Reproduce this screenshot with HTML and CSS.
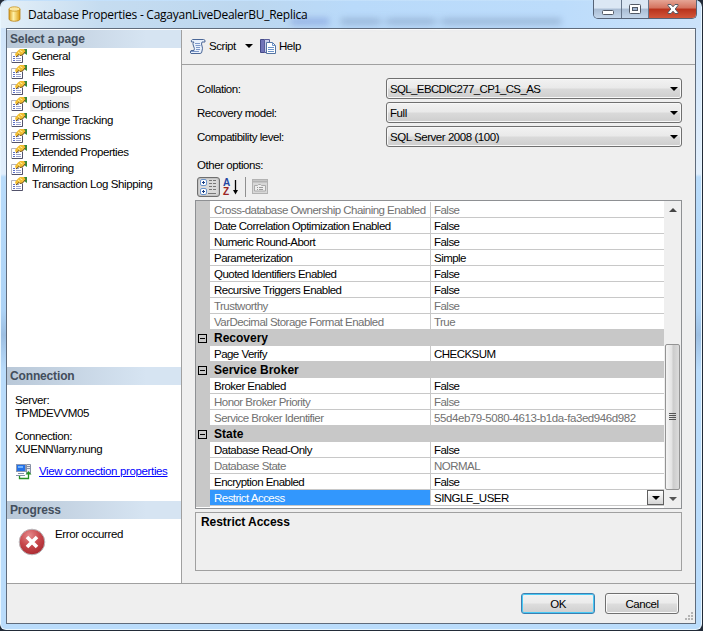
FILE: index.html
```html
<!DOCTYPE html>
<html lang="en">
<head>
<meta charset="utf-8">
<title>Database Properties</title>
<link rel="stylesheet" href="styles.css">
</head>
<body>
<svg width="0" height="0" class="defs" aria-hidden="true">
  <defs>
    <linearGradient id="gold"><stop offset="0" stop-color="#d99a18"/><stop offset=".4" stop-color="#fff2a8"/><stop offset="1" stop-color="#dc9c10"/></linearGradient>
    <radialGradient id="red" cx=".4" cy=".25" r=".8"><stop offset="0" stop-color="#e58a8c"/><stop offset=".5" stop-color="#c8484d"/><stop offset="1" stop-color="#a8282e"/></radialGradient>
    <symbol id="page" viewBox="0 0 16 16">
      <path d="M.5 4.500h11v10H.5z" fill="#fff" stroke="#b4b4be"/>
      <path d="M1 14.500h10.500V8" fill="none" stroke="#52526a"/>
      <path d="M2 8.500h2M2 10.500h2M2 12.500h2" stroke="#5d70c8"/>
      <path d="M5 8.500h3M5 10.500h5M5 12.500h5" stroke="#9aa3cf"/>
      <path d="M13 1h3v6l-3-2z" fill="#378b3b"/>
      <path d="M4 6l3-3.500 2-1.500h4l1.500 2.500-3 3.500-2.500.5-1-1-3 2.500z" fill="#f2bd32"/>
      <path d="M5 9l3-2.500 1 1 2.500-.5 3-3.500" fill="none" stroke="#74531b"/>
      <path d="M7 4l2 1.500M9 2.500l2.500 1.500" stroke="#fff1a0"/>
    </symbol>
  </defs>
</svg>
<div class="window">
  <header class="titlebar">
    <svg class="db" width="14" height="16" viewBox="0 0 14 16"><path d="M1 3v10c0 3 11 3 11 0V3z" fill="url(#gold)" stroke="#b88016" stroke-width=".8"/><ellipse cx="6.500" cy="3" rx="5.500" ry="2.200" fill="#fbe7a0" stroke="#c99522" stroke-width=".8"/></svg>
    <div class="haze"></div>
    <h1>Database Properties - CagayanLiveDealerBU_Replica</h1>
    <div class="controls">
      <span class="ctl min"><svg width="14" height="8" viewBox="0 0 14 8"><rect x="1.500" y="2.500" width="11" height="4" rx="1" fill="#fff" stroke="#535a66"/></svg></span>
      <span class="ctl max"><svg width="14" height="12" viewBox="0 0 14 12"><rect x="1.500" y="1.500" width="11" height="9" rx="1" fill="#fff" stroke="#535a66"/><rect x="4.500" y="4.500" width="5" height="3" fill="#9fb3cf" stroke="#535a66"/></svg></span>
      <span class="ctl close"><svg width="14" height="12" viewBox="0 0 14 12"><path d="M2 1.500h3l2 2.300 2-2.300h3v1L9.200 6l2.800 3.500v1H9L7 8.200 5 10.500H2v-1L4.800 6 2 2.500z" fill="#fff" stroke="#535a66"/></svg></span>
    </div>
  </header>
  <div class="client">
    <div class="body">
      <aside class="side">
        <h2>Select a page</h2>
        <ul class="pages">
          <li><svg><use href="#page"/></svg><span>General</span></li>
          <li><svg><use href="#page"/></svg><span>Files</span></li>
          <li><svg><use href="#page"/></svg><span>Filegroups</span></li>
          <li class="current"><svg><use href="#page"/></svg><span>Options</span></li>
          <li><svg><use href="#page"/></svg><span>Change Tracking</span></li>
          <li><svg><use href="#page"/></svg><span>Permissions</span></li>
          <li><svg><use href="#page"/></svg><span>Extended Properties</span></li>
          <li><svg><use href="#page"/></svg><span>Mirroring</span></li>
          <li><svg><use href="#page"/></svg><span>Transaction Log Shipping</span></li>
        </ul>
        <h2>Connection</h2>
        <div class="conn">
          <p>Server:<br>TPMDEVVM05</p>
          <p>Connection:<br>XUENN\larry.nung</p>
          <div class="link">
            <svg width="17" height="17" viewBox="0 0 17 17"><rect x="1.500" y="1.500" width="9" height="7" fill="#2371e8" stroke="#8c98b0"/><path d="M3 3h5v2H3z" fill="#6fb2ff"/><path d="M3 10.500h6M1 12.500h9" stroke="#8590a8"/><path d="M11.500 1.500h4v9h-4z" fill="#e7e9ef" stroke="#8790a5"/><path d="M12 3.500h3M12 5.500h3" stroke="#8790a5"/><path d="M4.500 13v2.500h9V9" fill="none" stroke="#269026" stroke-width="1.300"/><path d="M10.500 11.500l3-3.500 3 3.500z" fill="#269026"/></svg>
            <a>View connection properties</a>
          </div>
        </div>
        <h2>Progress</h2>
        <div class="progress">
          <svg width="28" height="28" viewBox="0 0 28 28"><circle cx="14" cy="14" r="12.800" fill="url(#red)" stroke="#b9b9bd"/><path d="M9 9l10 10M19 9L9 19" stroke="#fff" stroke-width="3.600"/></svg>
          <span>Error occurred</span>
        </div>
      </aside>
      <main class="main">
        <div class="toolbar">
          <svg width="17" height="17" viewBox="0 0 17 17"><path d="M3.500 1.500h11q2 0 1.500 2.500h-3q-1 2 0 4t0 5q0 2.500-2 2.500H2q-1.500-1.500 0-3h3q1-2-.5-4.500T5 4H2.500q-1-1.500 1-2.500z" fill="#e9f1fc" stroke="#4b6797"/><path d="M6 5.500h5M6.500 7.500h5M7 9.500h4M7 11.500h4M2 13.500h8" stroke="#7d98c8"/></svg>
          <span class="script">Script</span><i class="tri"></i>
          <svg width="16" height="17" viewBox="0 0 16 17"><path d="M.5 1.500h4v13h-4z" fill="#7174b8" stroke="#454a88"/><path d="M4.500 1.500h5v13h-5z" fill="#c9cdeb" stroke="#5a5f9c"/><path d="M6.500 4.500h6l3 3v8h-9z" fill="#fff" stroke="#5474a3"/><path d="M12.500 4.500v3h3M8 9.500h6M8 11.500h6M8 13.500h6" fill="none" stroke="#6a93c9"/></svg>
          <span>Help</span>
        </div>
        <div class="panel">
          <div class="field"><label>Collation:</label><div class="select tight">SQL_EBCDIC277_CP1_CS_AS<i class="tri"></i></div></div>
          <div class="field"><label>Recovery model:</label><div class="select">Full<i class="tri"></i></div></div>
          <div class="field"><label>Compatibility level:</label><div class="select">SQL Server 2008 (100)<i class="tri"></i></div></div>
          <p class="other">Other options:</p>
          <div class="gridbar">
            <span class="cat"><svg width="18" height="16" viewBox="0 0 18 16"><rect x=".5" y=".5" width="6" height="6" rx="1.500" fill="#fff" stroke="#6c95cc"/><rect x=".5" y="9.500" width="6" height="6" rx="1.500" fill="#fff" stroke="#6c95cc"/><path d="M2 3.500h3M3.500 2v3M2 12.500h3M3.500 11v3" stroke="#173d86"/><path d="M9 1.500h3M13 1.500h3M9 4.500h3M13 4.500h3M9 7.500h3M13 7.500h3M9 10.500h3M13 10.500h3M8 14.500h8" stroke="#777"/></svg></span>
            <span class="sort"><span class="az"><b>A</b><b>Z</b></span><svg width="7" height="15" viewBox="0 0 7 15"><path d="M3.500 0v12" stroke="#000" stroke-width="1.300"/><path d="M1 10h5l-2.500 4.500z"/></svg></span>
            <span class="rule"></span>
            <svg class="prop" width="16" height="15" viewBox="0 0 16 15"><rect x=".5" y=".5" width="15" height="14" fill="#d8d8d8" stroke="#b2b2b2"/><path d="M1 2.500h14" stroke="#b2b2b2" stroke-width="2"/><path d="M2.500 12V6.500h3l1-1h2l1 1h4V12z" fill="#eee" stroke="#aaa"/><path d="M5 8.500h1M7 8.500h4M5 10.500h1M7 10.500h4" stroke="#999"/></svg>
          </div>
          <div class="gridbox">
            <div class="rows">
              <div class="row off"><span>Cross-database Ownership Chaining Enabled</span><span>False</span></div>
              <div class="row"><span>Date Correlation Optimization Enabled</span><span>False</span></div>
              <div class="row"><span>Numeric Round-Abort</span><span>False</span></div>
              <div class="row"><span>Parameterization</span><span>Simple</span></div>
              <div class="row"><span>Quoted Identifiers Enabled</span><span>False</span></div>
              <div class="row"><span>Recursive Triggers Enabled</span><span>False</span></div>
              <div class="row off"><span>Trustworthy</span><span>False</span></div>
              <div class="row off"><span>VarDecimal Storage Format Enabled</span><span>True</span></div>
              <div class="group"><i></i>Recovery</div>
              <div class="row"><span>Page Verify</span><span>CHECKSUM</span></div>
              <div class="group"><i></i>Service Broker</div>
              <div class="row"><span>Broker Enabled</span><span>False</span></div>
              <div class="row off"><span>Honor Broker Priority</span><span>False</span></div>
              <div class="row off"><span>Service Broker Identifier</span><span class="guid">55d4eb79-5080-4613-b1da-fa3ed946d982</span></div>
              <div class="group"><i></i>State</div>
              <div class="row"><span>Database Read-Only</span><span>False</span></div>
              <div class="row off"><span>Database State</span><span>NORMAL</span></div>
              <div class="row"><span>Encryption Enabled</span><span>False</span></div>
              <div class="row chosen"><span>Restrict Access</span><span>SINGLE_USER</span><button class="drop"><i class="tri"></i></button></div>
            </div>
            <div class="scroll">
              <i class="up"></i>
              <div class="thumb"><i></i><i></i><i></i><i></i></div>
              <i class="down"></i>
            </div>
          </div>
          <div class="desc">Restrict Access</div>
        </div>
      </main>
    </div>
    <footer class="actions">
      <button class="btn ok">OK</button>
      <button class="btn">Cancel</button>
      <svg class="grip" width="10" height="10" viewBox="0 0 10 10"><path d="M7 1h2M4 4h2M7 4h2M1 7h2M4 7h2M7 7h2" stroke="#b4b4b4" stroke-width="2"/></svg>
    </footer>
  </div>
</div>
</body>
</html>
```

FILE: styles.css
```css
* { box-sizing: border-box; margin: 0; padding: 0; }
body {
  width: 703px; height: 631px; overflow: hidden; background: #222b38;
  font: 11.5px/16px "Liberation Sans", Arial, sans-serif; letter-spacing: -0.45px; color: #000;
}
.defs { position: absolute; }
span, label, a, p { white-space: nowrap; }
.window {
  width: 702px; height: 630px; padding: 1px 5px 6px; border: 1px solid #e8f6ff; border-top-width: 0;
  border-radius: 7px 7px 6px 6px;
  background: linear-gradient(180deg, #c3e0fb 0, #cfe4fa 28px, #e2effc 174px, #b9dcfb 177px, #add3f6 310px, #9dbfe2 335px, #badcfb 370px, #badcfb 100%);
}
.titlebar {
  position: relative; height: 27px; display: flex; align-items: flex-start;
  margin: 0 -5px; padding: 5px 6px 0 7px; border-radius: 7px 7px 0 0;
  background: linear-gradient(90deg, #e3eff8 0, #c5dcf0 100px, #bcd7ef 250px, #b9dafa 350px, #bcdcfb 560px, #cbe2fa 100%);
}
.haze {
  position: absolute; left: 290px; top: 17px; width: 270px; height: 7px; filter: blur(3px);
  background: linear-gradient(90deg, rgba(80,110,200,.35) 0 38px, rgba(80,110,200,0) 38px 50px, rgba(80,100,140,.28) 50px 88px, rgba(80,100,140,.1) 88px 97px, rgba(80,100,140,.28) 97px 143px, rgba(80,100,140,.1) 143px 152px, rgba(80,100,140,.28) 152px);
}
.titlebar h1 { position: relative; margin-left: 6px; font: 12px/18px "Open Sans", "Noto Sans", sans-serif; letter-spacing: -0.26px; white-space: nowrap; }
.controls {
  position: absolute; right: 4px; top: -1px; height: 19px; display: flex;
  border: 1px solid #566377; border-top: 0; border-radius: 0 0 5px 5px; overflow: hidden;
}
.ctl { height: 18px; display: flex; align-items: center; justify-content: center; background: linear-gradient(#dbe7f4 0 45%, #a9bcd3 50%, #c4d6ea); }
.min { width: 28px; border-right: 1px solid #66758a; padding-top: 5px; }
.max { width: 27px; border-right: 1px solid #66758a; }
.close { width: 47px; background: linear-gradient(#e5a595 0, #d4715d 45%, #b8321c 50%, #d2563a); }
.client { width: 690px; height: 596px; border: 1px solid #5f6b7b; background: #efefef; }
.body { height: 555px; display: flex; border-top: 1px solid #fff; border-bottom: 1px solid #a0a0a0; }
.side { width: 175px; border-right: 1px solid #a0a0a0; background: #fff; letter-spacing: -.4px; }
.side h2 {
  height: 18px; padding-left: 3px; font-size: 12px; line-height: 18px; letter-spacing: -.15px; color: #434e5c;
  background: linear-gradient(90deg, #b9c8d8, #d6e4f2 80%);
}
.pages { height: 319px; list-style: none; }
.pages li { display: flex; height: 16px; align-items: center; padding-left: 4px; }
.pages svg { width: 16px; height: 16px; }
.pages span { padding: 0 2px; margin-left: 3px; }
.current span { background: #efefef; }
.conn { height: 116px; padding: 9px 8px 0; line-height: 13px; }
.conn p { margin-bottom: 10px; }
.link { display: flex; align-items: center; gap: 7px; margin-top: -3px; }
.link a { color: #00f; text-decoration: underline; letter-spacing: -.36px; }
.progress { display: flex; padding: 9px 11px; gap: 9px; }
.progress span { margin-top: -2px; }
.main { flex: 1; }
.toolbar { display: flex; height: 35px; align-items: center; padding: 0 7px 2px; border-bottom: 1px solid #a0a0a0; }
.toolbar span { margin-left: 3px; }
.toolbar .script { width: 39px; }
.tri { display: block; border: solid transparent; border-width: 4px 4px 0; border-top-color: #000; }
.toolbar .tri { margin: 0 7px 0 -3px; }
.panel { padding: 13px 13px 0 14px; }
.field { display: flex; height: 21px; margin-bottom: 3px; align-items: center; }
.field label { width: 190px; padding-left: 1px; }
.select {
  width: 296px; height: 21px; padding: 0 3px; display: flex; justify-content: space-between; align-items: center;
  border: 1px solid #707070; border-radius: 3px; box-shadow: inset 0 0 0 1px #f8f8f8;
  background: linear-gradient(#f2f2f2, #e9e9e9 48%, #dadada 52%, #cecece);
}
.tight { letter-spacing: -.64px; }
.other { margin-top: 10px; padding-left: 1px; }
.gridbar { display: flex; height: 27px; align-items: flex-start; padding: 4px 0 0 1px; }
.cat { width: 23px; height: 20px; display: flex; align-items: center; justify-content: center; border: 1px solid #6f6f6f; border-radius: 3px; background: #dadada; box-shadow: inset 0 0 2px #888; }
.sort { display: flex; align-items: center; margin: 1px 0 0 3px; gap: 2px; height: 18px; }
.az { display: flex; flex-direction: column; width: 7px; font-size: 10px; line-height: 9px; }
.az b:first-child { color: #2547a2; }
.az b:last-child { color: #9b2423; }
.rule { width: 1px; height: 20px; margin: 0 6px; background: #909090; }
.prop { margin-top: 2px; }
.gridbox { display: flex; height: 309px; margin-left: -1px; border: 1px solid #8e9093; background: #fff; width: 487px; }
.rows { width: 468px; height: 306px; padding-top: 1px; border-left: 14px solid #c8c8c8; letter-spacing: -.53px; }
.row { position: relative; display: grid; grid-template-columns: 220px 1fr; height: 16px; border-bottom: 1px solid #c8c8c8; line-height: 16px; }
.row > span { height: 15px; padding-left: 4px; }
.row > span:nth-child(2) { padding-left: 3px; border-left: 1px solid #c8c8c8; }
.row > .guid { letter-spacing: -.42px; }
.off { color: #717171; }
.group { display: flex; align-items: center; height: 16px; margin-left: -14px; padding-left: 2px; background: #c8c8c8; font-weight: bold; font-size: 12px; letter-spacing: 0; }
.group i { width: 9px; height: 9px; margin-right: 7px; border: 1px solid #000; background: linear-gradient(#000, #000) center / 5px 1px no-repeat; }
.chosen > span:first-child { background: #3297fd; color: #fff; }
.drop { position: absolute; right: 0; top: 0; width: 17px; height: 15px; display: flex; align-items: center; justify-content: center; border: 1px solid #606060; background: linear-gradient(#fff, #d5d5d5); }
.scroll { width: 17px; height: 307px; display: flex; flex-direction: column; align-items: center; background: #efefef; }
.up { border: solid transparent; border-width: 0 4px 4px; border-bottom-color: #444; margin-top: 7px; }
.down { border: solid transparent; border-width: 4px 4px 0; border-top-color: #555; margin-top: 7px; }
.thumb { width: 15px; height: 146px; margin-top: 132px; padding-top: 68px; border: 1px solid #939393; border-radius: 2px; background: linear-gradient(90deg, #f4f4f4, #e2e2e2 48%, #cbcbcb 52%, #dcdcdc); display: flex; flex-direction: column; align-items: center; gap: 1px; }
.thumb i { width: 7px; height: 1px; background: #555; }
.desc { width: 487px; height: 59px; margin: 3px 0 0 -1px; padding: 1px 5px; border: 1px solid #a0a0a0; font-weight: bold; font-size: 12px; letter-spacing: -.05px; }
.actions { position: relative; display: flex; gap: 10px; justify-content: flex-end; padding: 9px 16px 0 0; }
.btn { width: 74px; height: 21px; font: inherit; letter-spacing: inherit; border: 1px solid #707070; border-radius: 3px; background: linear-gradient(#f2f2f2, #ebebeb 48%, #dddddd 52%, #cfcfcf); box-shadow: inset 0 0 0 1px #fafafa; }
.ok { border-color: #3c7fb1; box-shadow: inset 0 0 0 1px #48c9f5; }
.grip { position: absolute; right: 1px; bottom: -8px; }
```
